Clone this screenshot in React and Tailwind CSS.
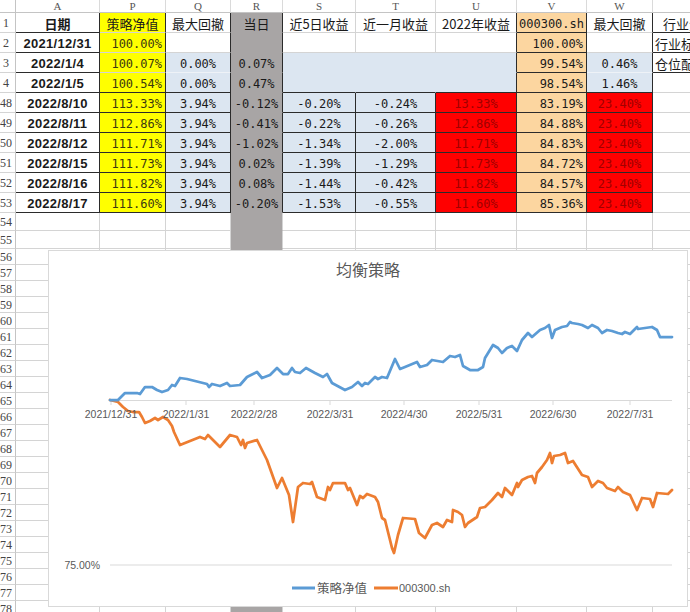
import React from 'react'

// column widths: A, P, Q, R, S, T, U, V, W, X
const W = ['w-[84px]', 'w-[66px]', 'w-[65px]', 'w-[52px]', 'w-[73px]', 'w-[80px]', 'w-[81px]', 'w-[70px]', 'w-[66px]', 'w-[120px]']
const LETTERS = ['A', 'P', 'Q', 'R', 'S', 'T', 'U', 'V', 'W', '']

const MONO = "font-['DejaVu_Sans_Mono',monospace] text-[12px]"
const CJK = "font-['Noto_Sans_CJK_SC',sans-serif] text-[13px]"
const DATE = "font-['Liberation_Sans',Arial,sans-serif] font-bold text-[13px] tracking-[0.3px]"

const rD = 'border-r-[#2b2b2b]'
const rL = 'border-r-[#d4d4d4]'
const bD = 'border-b-[#2b2b2b]'
const bL = 'border-b-[#d4d4d4]'

const YEL = 'bg-[#ffff00]'
const BLU = 'bg-[#dce6f1]'
const GRY = 'bg-[#a8a5a5]'
const ORG = 'bg-[#fcd6a0]'
const RED = 'bg-[#ff0000]'

function Cell({ i, bg = 'bg-white', r = rL, b = bL, j = 'justify-center', f = MONO, t = 'text-[#1a1a1a]', children }) {
  return (
    <div className={`${W[i]} ${bg} ${r} ${b} ${j} ${f} ${t} shrink-0 flex items-end pb-[2px] border-r border-b overflow-hidden whitespace-nowrap leading-none`}>
      {children}
    </div>
  )
}

function Row({ n, h = 'h-[20px]', children }) {
  return (
    <div className={`flex ${h}`}>
      <div className="w-[16px] shrink-0 flex items-center justify-center pr-[3px] border-r border-b border-r-[#c4c4c4] border-b-[#d4d4d4] font-['Liberation_Serif',serif] text-[12px] text-[#444] overflow-visible whitespace-nowrap">
        {n}
      </div>
      {children}
    </div>
  )
}

const TAIL = [
  ['48', '2022/8/10', '113.33%', '3.94%', '-0.12%', '-0.20%', '-0.24%', '13.33%', '83.19%', '23.40%'],
  ['49', '2022/8/11', '112.86%', '3.94%', '-0.41%', '-0.22%', '-0.26%', '12.86%', '84.88%', '23.40%'],
  ['50', '2022/8/12', '111.71%', '3.94%', '-1.02%', '-1.34%', '-2.00%', '11.71%', '84.83%', '23.40%'],
  ['51', '2022/8/15', '111.73%', '3.94%', '0.02%', '-1.39%', '-1.29%', '11.73%', '84.72%', '23.40%'],
  ['52', '2022/8/16', '111.82%', '3.94%', '0.08%', '-1.44%', '-0.42%', '11.82%', '84.57%', '23.40%'],
  ['53', '2022/8/17', '111.60%', '3.94%', '-0.20%', '-1.53%', '-0.55%', '11.60%', '85.36%', '23.40%'],
]

const BLANK_ROWS = [
  ['54', 'h-[18px]'], ['55', 'h-[18px]'],
  ...Array.from({ length: 23 }, (_, k) => [String(56 + k), 'h-[16px]']),
]

const BLUE_LINE = [
  [110, 400], [118, 400], [125, 393], [137, 393], [140, 394], [145, 387], [152, 387], [157, 390], [162, 392], [168, 390],
  [172, 385], [175, 386], [180, 378], [187, 379], [207, 384], [209, 387], [212, 384], [220, 386], [227, 383], [230, 386],
  [240, 385], [247, 377], [257, 372], [262, 378], [270, 375], [277, 368], [283, 374], [288, 374], [292, 368], [295, 372],
  [300, 373], [306, 368], [315, 373], [323, 377], [327, 374], [332, 383], [345, 390], [352, 387], [358, 382], [362, 386],
  [365, 383], [368, 384], [375, 377], [378, 379], [382, 377], [387, 378], [395, 359], [400, 369], [405, 367], [417, 362],
  [420, 367], [427, 365], [432, 360], [443, 362], [450, 356], [455, 357], [460, 355], [463, 366], [470, 370], [478, 370],
  [483, 367], [485, 358], [493, 345], [498, 348], [502, 353], [507, 348], [512, 346], [517, 351], [522, 340], [528, 333],
  [532, 337], [540, 330], [545, 328], [549, 325], [552, 338], [555, 330], [562, 327], [567, 326], [570, 322], [572, 323],
  [578, 324], [582, 325], [588, 328], [592, 325], [598, 328], [602, 333], [607, 330], [612, 331], [618, 333], [622, 334],
  [625, 332], [630, 334], [637, 327], [638, 329], [645, 328], [652, 327], [657, 330], [660, 337], [665, 337], [672, 337],
]

const ORANGE_LINE = [
  [110, 400], [118, 402], [123, 407], [128, 411], [133, 412], [139, 412], [142, 417], [145, 423], [150, 421], [155, 418],
  [158, 420], [163, 417], [168, 420], [172, 426], [174, 432], [180, 445], [200, 437], [205, 439], [208, 435], [220, 447],
  [230, 435], [237, 437], [241, 445], [243, 440], [245, 448], [247, 443], [257, 440], [267, 460], [277, 488], [282, 478],
  [289, 495], [293, 522], [298, 487], [303, 483], [310, 484], [312, 482], [317, 497], [325, 500], [328, 487], [330, 490],
  [333, 483], [345, 483], [348, 490], [350, 488], [357, 505], [360, 496], [363, 498], [367, 494], [375, 497], [378, 502],
  [382, 518], [385, 520], [392, 548], [394, 553], [398, 535], [403, 518], [415, 519], [419, 533], [425, 538], [432, 525],
  [437, 523], [443, 527], [447, 520], [452, 522], [453, 510], [458, 512], [462, 515], [465, 527], [468, 523], [477, 517],
  [480, 508], [485, 507], [492, 500], [498, 493], [502, 497], [505, 488], [512, 495], [517, 483], [518, 487], [522, 480],
  [528, 477], [532, 476], [535, 483], [537, 473], [542, 467], [547, 460], [550, 453], [552, 463], [554, 456], [560, 455],
  [565, 453], [568, 463], [573, 461], [582, 475], [588, 477], [592, 487], [598, 481], [603, 483], [607, 488], [615, 491],
  [618, 487], [623, 492], [630, 495], [637, 510], [642, 498], [650, 499], [653, 507], [657, 493], [668, 494], [672, 490],
]

const TICKS = [
  [111, '2021/12/31'], [186, '2022/1/31'], [254, '2022/2/28'], [330, '2022/3/31'],
  [404, '2022/4/30'], [479, '2022/5/31'], [553, '2022/6/30'], [630, '2022/7/31'],
]

const pts = (arr) => arr.map(([x, y]) => `${x},${y}`).join(' ')

function Chart() {
  return (
    <div className="absolute left-[48px] top-[250px] w-[640px] h-[357px] border border-[#d9d9d9] bg-white">
      <div className="pt-[8px] text-center leading-[20px] text-[16px] text-[#595959] font-['Noto_Sans_CJK_SC',sans-serif]">均衡策略</div>
      <svg className="absolute inset-0" width="638" height="355" viewBox="0 0 638 355">
        <g transform="translate(-49 -251)">
          <line x1="110" y1="565" x2="672" y2="565" stroke="#d9d9d9" strokeWidth="1" />
          <line x1="110" y1="400.5" x2="672" y2="400.5" stroke="#d9d9d9" strokeWidth="1" />
          {TICKS.map(([x]) => (
            <line key={x} x1={x} y1="400" x2={x} y2="405" stroke="#d9d9d9" strokeWidth="1" />
          ))}
          <polyline points={pts(ORANGE_LINE)} fill="none" stroke="#ed7d31" strokeWidth="2.75" strokeLinejoin="round" strokeLinecap="round" />
          <polyline points={pts(BLUE_LINE)} fill="none" stroke="#5b9bd5" strokeWidth="2.75" strokeLinejoin="round" strokeLinecap="round" />
          {TICKS.map(([x, label]) => (
            <text key={label} x={x} y="418" textAnchor="middle" fontSize="10.5" fill="#595959" fontFamily="'Liberation Sans', Arial, sans-serif">{label}</text>
          ))}
          <text x="100" y="569" textAnchor="end" fontSize="10.5" fill="#595959" fontFamily="'Liberation Sans', Arial, sans-serif">75.00%</text>
          <line x1="292" y1="588" x2="315" y2="588" stroke="#5b9bd5" strokeWidth="3" />
          <text x="317" y="593" fontSize="12.5" fill="#595959" fontFamily="'Noto Sans CJK SC', sans-serif">策略净值</text>
          <line x1="374" y1="588" x2="398" y2="588" stroke="#ed7d31" strokeWidth="3" />
          <text x="399" y="592" fontSize="11" fill="#595959" fontFamily="'Liberation Sans', Arial, sans-serif">000300.sh</text>
        </g>
      </svg>
    </div>
  )
}

export default function App() {
  const OLIVE = 'text-[#3b3810]'
  const DRED = 'text-[#a00000]'
  const RIGHT = 'justify-end pr-[3px]'

  return (
    <div className="relative w-[690px] h-[612px] overflow-hidden bg-white">
      {/* column letters */}
      <div className="flex h-[13px]">
        <div className="w-[16px] shrink-0 border-r border-b border-[#c4c4c4]" />
        {LETTERS.map((l, i) => (
          <div key={i} className={`${W[i]} shrink-0 flex items-center justify-center border-r border-b border-r-[#dadada] border-b-[#c4c4c4] font-['Liberation_Serif',serif] text-[11px] leading-none text-[#555]`}>
            {l}
          </div>
        ))}
      </div>

      {/* header */}
      <Row n="1">
        <Cell i={0} r={rD} b={bD} f={`${CJK} font-bold`}>日期</Cell>
        <Cell i={1} bg={YEL} r={rD} f={CJK}>策略净值</Cell>
        <Cell i={2} r={rD} f={CJK}>最大回撤</Cell>
        <Cell i={3} bg={GRY} r={rD} b="border-b-[#a8a5a5]" f={CJK}>当日</Cell>
        <Cell i={4} f={CJK}>近5日收益</Cell>
        <Cell i={5} f={CJK}>近一月收益</Cell>
        <Cell i={6} r={rD} f={CJK}>2022年收益</Cell>
        <Cell i={7} bg={ORG} r={rD} b={bD}>000300.sh</Cell>
        <Cell i={8} r={rD} f={CJK}>最大回撤</Cell>
        <Cell i={9} r="border-r-white" b={bD} j="justify-start pl-[10px]" f={CJK}>行业分类</Cell>
      </Row>

      <Row n="2">
        <Cell i={0} r={rD} b={bD} f={DATE}>2021/12/31</Cell>
        <Cell i={1} bg={YEL} r={rD} j={RIGHT} t={OLIVE}>100.00%</Cell>
        <Cell i={2} r={rD} />
        <Cell i={3} bg={GRY} r={rD} b="border-b-[#a8a5a5]" />
        <Cell i={4} />
        <Cell i={5} />
        <Cell i={6} r={rD} />
        <Cell i={7} bg={ORG} r={rD} b={bD} j={RIGHT}>100.00%</Cell>
        <Cell i={8} r={rD} />
        <Cell i={9} r="border-r-white" b={bD} j="justify-start pl-[2px]" f={CJK}>行业标准</Cell>
      </Row>

      <Row n="3">
        <Cell i={0} r={rD} b={bD} f={DATE}>2022/1/4</Cell>
        <Cell i={1} bg={YEL} r={rD} j={RIGHT} t={OLIVE}>100.07%</Cell>
        <Cell i={2} bg={BLU} r={rD} b="border-b-[#eef2f7]">0.00%</Cell>
        <Cell i={3} bg={GRY} r={rD} b="border-b-[#a8a5a5]">0.07%</Cell>
        <Cell i={4} bg={BLU} r="border-r-[#dce6f1]" b="border-b-[#dce6f1]" />
        <Cell i={5} bg={BLU} r="border-r-[#dce6f1]" b="border-b-[#dce6f1]" />
        <Cell i={6} bg={BLU} r={rD} b="border-b-[#dce6f1]" />
        <Cell i={7} bg={ORG} r={rD} b={bD} j={RIGHT}>99.54%</Cell>
        <Cell i={8} bg={BLU} r={rD} b="border-b-[#eef2f7]">0.46%</Cell>
        <Cell i={9} r="border-r-white" b={bD} j="justify-start pl-[2px]" f={CJK}>仓位配置</Cell>
      </Row>

      <Row n="4">
        <Cell i={0} r={rD} b={bD} f={DATE}>2022/1/5</Cell>
        <Cell i={1} bg={YEL} r={rD} b={bD} j={RIGHT} t={OLIVE}>100.54%</Cell>
        <Cell i={2} bg={BLU} r={rD} b={bD}>0.00%</Cell>
        <Cell i={3} bg={GRY} r={rD} b="border-b-[#a8a5a5]">0.47%</Cell>
        <Cell i={4} bg={BLU} r="border-r-[#dce6f1]" b={bD} />
        <Cell i={5} bg={BLU} r="border-r-[#dce6f1]" b={bD} />
        <Cell i={6} bg={BLU} r={rD} b={bD} />
        <Cell i={7} bg={ORG} r={rD} b={bD} j={RIGHT}>98.54%</Cell>
        <Cell i={8} bg={BLU} r={rD} b={bD}>1.46%</Cell>
        <Cell i={9} r="border-r-white" />
      </Row>

      {TAIL.map(([n, d, p, q, r, s, t, u, v, w]) => (
        <Row key={n} n={n}>
          <Cell i={0} r={rD} b={bD} f={DATE}>{d}</Cell>
          <Cell i={1} bg={YEL} r={rD} b={bD} j={RIGHT} t={OLIVE}>{p}</Cell>
          <Cell i={2} bg={BLU} r={rD} b={bD}>{q}</Cell>
          <Cell i={3} bg={GRY} r={rD} b="border-b-[#a8a5a5]">{r}</Cell>
          <Cell i={4} bg={BLU} r={rD} b={bD}>{s}</Cell>
          <Cell i={5} bg={BLU} r={rD} b={bD}>{t}</Cell>
          <Cell i={6} bg={RED} r={rD} b={bD} t={DRED}>{u}</Cell>
          <Cell i={7} bg={ORG} r={rD} b={bD} j={RIGHT}>{v}</Cell>
          <Cell i={8} bg={RED} r={rD} b={bD} t={DRED}>{w}</Cell>
          <Cell i={9} r="border-r-white" />
        </Row>
      ))}

      {BLANK_ROWS.map(([n, h]) => (
        <Row key={n} n={n} h={h}>
          {W.map((_, i) => (
            <Cell key={i} i={i} bg={i === 3 ? GRY : 'bg-white'} b={i === 3 ? 'border-b-[#a8a5a5]' : bL} />
          ))}
        </Row>
      ))}

      <Chart />
    </div>
  )
}
